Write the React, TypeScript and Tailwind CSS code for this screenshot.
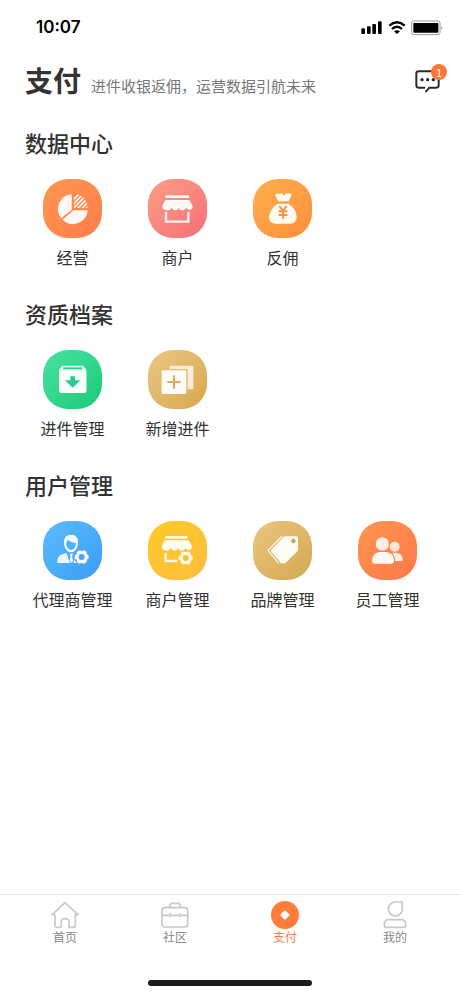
import type { ReactNode } from 'react';

const STORE_AWNING = 'M52 63H124L134 81Q134 92 125 92Q117 92 115 86Q111 94 103 94Q95 94 92 86Q90 94 82 94Q75 94 71 86Q67 94 60 94Q43 94 43 80Z';

function Glyph({ children }: { children: ReactNode }) {
  return (
    <svg viewBox="0 0 177 177" className="size-full" fill="#fff" fillOpacity="0.94" aria-hidden="true">
      {children}
    </svg>
  );
}

function Gear({ x, y, color }: { x: number; y: number; color: string }) {
  return (
    <g transform={`translate(${x} ${y})`} fillOpacity="1">
      <circle r="23" fill={color} />
      <circle r="18" fill="#fff8ea" />
      {[0, 60, 120].map((angle) => (
        <rect key={angle} x="-21" y="-7" width="42" height="14" rx="4" fill="#fff8ea" transform={`rotate(${angle})`} />
      ))}
      <circle r="9" fill={color} />
    </g>
  );
}

const pie = (
  <Glyph>
    <path d="M86 46A44 44 0 0 0 55 118L86 92Z" />
    <path d="M91 94H134A44 44 0 0 1 59 122Z" />
    <clipPath id="pie-slice">
      <path d="M92 44A44 44 0 0 1 134 87H92Z" />
    </clipPath>
    <g clipPath="url(#pie-slice)" stroke="#fff" strokeWidth="5" strokeOpacity="0.94">
      <path d="M88 65L118 35M88 78L128 38M88 91L138 41M98 94L144 48M111 94L144 61M124 94L146 72" />
    </g>
  </Glyph>
);

const store = (
  <Glyph>
    <rect x="52" y="49" width="72" height="8" rx="3" />
    <path d={STORE_AWNING} />
    <path d="M54 98V128H121V98" fill="none" stroke="#fff" strokeWidth="7" strokeOpacity="0.88" />
  </Glyph>
);

const moneyBag = (
  <Glyph>
    <path d="M68 46Q74 42 80 45L88 42L91 50L98 44Q107 41 115 46Q117 48 114 52L107 67H76L68 52Q65 48 68 46Z" />
    <path d="M73 74H107Q131 91 131 114Q131 134 109 134H69Q48 134 48 114Q50 91 73 74Z" />
    <path d="M79 81L90 95L101 81M90 95V119M77 97H103M77 108H103" fill="none" stroke="#fb9638" strokeWidth="6" />
  </Glyph>
);

const archive = (
  <Glyph>
    <path d="M57 47H121L130 59V121Q130 129 122 129H56Q48 129 48 121V59Z" fillOpacity="0.78" />
    <path d="M61 55H117" stroke="#22cf8c" strokeWidth="5" />
    <path d="M48 62H130V121Q130 129 122 129H56Q48 129 48 121Z" fillOpacity="0.85" />
    <path d="M82 79H96V91H112L89 113L66 91H82Z" fill="#29cb8d" fillOpacity="1" />
  </Glyph>
);

const addDocument = (
  <Glyph>
    <path d="M68 47H133Q136 47 136 50V115Q136 118 133 118H119V61Q119 57 115 57H65V50Q65 47 68 47Z" fillOpacity="0.75" />
    <rect x="41" y="61" width="74" height="71" rx="4" />
    <path d="M78 76V116M58 96H98" stroke="#dcae59" strokeWidth="6" />
  </Glyph>
);

const agent = (
  <Glyph>
    <path d="M84 41C71 41 63 49 63 62C63 80 71 94 84 94C97 94 105 80 105 62C105 49 97 41 84 41Z" />
    <path d="M69 68Q72 59 76 57Q86 67 99 66Q98 84 84 87Q72 85 69 68Z" fill="#51b0fa" fillOpacity="1" />
    <path d="M43 126Q41 107 54 101L70 95L80 122V126Z" fillOpacity="0.88" />
    <path d="M79 98H91L87 105L90 119L85 126L80 119L83 105Z" />
    <path d="M98 95L108 99V126H91Z" fillOpacity="0.88" />
    <Gear x={116} y={108} color="#48a7f8" />
  </Glyph>
);

const storeSettings = (
  <Glyph>
    <rect x="52" y="45" width="66" height="8" rx="2" />
    <path d={STORE_AWNING} transform="translate(-2 -5)" />
    <path d="M53 95V120H88" fill="none" stroke="#fff" strokeWidth="7" strokeOpacity="0.9" />
    <Gear x={113} y={111} color="#fdc22e" />
  </Glyph>
);

const tag = (
  <Glyph>
    <path d="M97 46H130Q135 46 135 51V85Q135 89 132 92L98 125Q95 128 91 127H84L54 91Q53 89 55 86L91 49Q94 46 97 46Z" />
    <path d="M87 46L45 88L77 127" fill="none" stroke="#fff" strokeWidth="4" strokeOpacity="0.85" />
    <circle cx="121" cy="60" r="7" fill="#cfa74c" fillOpacity="1" />
  </Glyph>
);

const staff = (
  <Glyph>
    <circle cx="110" cy="77" r="15" fillOpacity="0.8" />
    <path d="M103 95H114Q134 97 134 116Q134 120 130 120H108Z" fillOpacity="0.85" />
    <circle cx="73" cy="69" r="22" fill="#ff8650" fillOpacity="1" />
    <circle cx="73" cy="69" r="20" fillOpacity="0.85" />
    <path d="M65 90H87Q112 95 112 121Q112 131 104 131H60Z" fill="#ff8049" fillOpacity="1" />
    <path d="M63 93H87Q108 97 108 121Q108 128 101 128H49Q42 128 42 121Q43 97 63 93Z" />
  </Glyph>
);

type Entry = { label: string; tile: string; icon: ReactNode };

const sections: { title: string; entries: Entry[] }[] = [
  {
    title: '数据中心',
    entries: [
      { label: '经营', tile: 'from-[#ff984f] to-[#ff7b4b]', icon: pie },
      { label: '商户', tile: 'from-[#fd9d85] to-[#f56f78]', icon: store },
      { label: '反佣', tile: 'from-[#ffb04e] to-[#ff8d3b]', icon: moneyBag },
    ],
  },
  {
    title: '资质档案',
    entries: [
      { label: '进件管理', tile: 'from-[#48e2a1] to-[#12cb79]', icon: archive },
      { label: '新增进件', tile: 'from-[#eac783] to-[#d8a74b]', icon: addDocument },
    ],
  },
  {
    title: '用户管理',
    entries: [
      { label: '代理商管理', tile: 'from-[#5bbcfd] to-[#3b9cf6]', icon: agent },
      { label: '商户管理', tile: 'from-[#fdcb25] to-[#febc3c]', icon: storeSettings },
      { label: '品牌管理', tile: 'from-[#e9c680] to-[#d4a850]', icon: tag },
      { label: '员工管理', tile: 'from-[#ff9650] to-[#ff7748]', icon: staff },
    ],
  },
];

const tabs = [
  {
    label: '首页',
    active: false,
    icon: (
      <path d="M3 41L42 5L81 41H73V75Q73 79 69 79H54V61Q54 53 42 53Q31 53 31 61V79H17Q12 79 12 75V41Z" />
    ),
  },
  {
    label: '社区',
    active: false,
    icon: (
      <>
        <rect x="3" y="20" width="77" height="58" rx="8" />
        <path d="M27 20V12Q27 7 32 7H52Q57 7 57 12V20M3 43H23M30 43H52M59 43H80M27 37V49M56 37V49" />
      </>
    ),
  },
  {
    label: '支付',
    active: true,
    icon: (
      <>
        <circle cx="42" cy="42" r="42" fill="#ff7c3b" stroke="none" />
        <path d="M42 31L53 42L42 53L31 42Z" fill="#fff" stroke="#fff" strokeWidth="6" />
      </>
    ),
  },
  {
    label: '我的',
    active: false,
    icon: (
      <>
        <path d="M43 3H64V24A21 21 0 1 1 43 3Z" />
        <path d="M24 56H60Q74 56 74 70V74Q74 79 69 79H15Q10 79 10 74V70Q10 56 24 56Z" />
      </>
    ),
  },
];

function StatusBar() {
  return (
    <div className="flex h-14 items-center justify-between pl-9 pr-4 text-black">
      <time className="font-[Inter] text-[17px] font-semibold">10:07</time>
      <svg viewBox="0 0 249 48" className="h-4 w-[83px]" aria-hidden="true">
        <rect x="1" y="25" width="11" height="17" rx="3" />
        <rect x="18" y="19" width="11" height="23" rx="3" />
        <rect x="34" y="12" width="11" height="30" rx="3" />
        <rect x="51" y="4" width="11" height="38" rx="3" />
        <g fill="none" stroke="#000" strokeWidth="7">
          <path d="M85 17Q108 -3 131 17" />
          <path d="M93 27Q108 13 123 27" />
        </g>
        <path d="M99 34Q108 27 117 34L108 42Z" />
        <rect x="152" y="3" width="85" height="41" rx="6" fill="none" stroke="#999" strokeWidth="3" />
        <rect x="157" y="9" width="75" height="29" rx="2" />
        <path d="M241 18Q247 23 241 29Z" fill="#999" />
      </svg>
    </div>
  );
}

export default function App() {
  return (
    <div className="flex min-h-screen flex-col bg-white font-['Noto_Sans_CJK_SC',sans-serif] text-[#333]">
      <StatusBar />
      <header className="flex h-12 items-center justify-between pl-[25px] pr-[13px]">
        <div className="flex items-baseline gap-[10px]">
          <h1 className="text-[28px] font-bold leading-[48px]">支付</h1>
          <p className="text-[15px] text-[#777]">进件收银返佣，运营数据引航未来</p>
        </div>
        <button type="button" aria-label="消息" className="relative size-8">
          <svg viewBox="0 0 96 96" className="size-full" fill="none" stroke="#2b2b2b" strokeWidth="6" strokeLinecap="round" aria-hidden="true">
            <path d="M28 71H11Q4 71 4 64V29Q4 22 11 22H64Q71 22 71 29V64Q71 71 64 71H43L33 82" />
            <g fill="#2b2b2b" stroke="none">
              <circle cx="21" cy="47" r="5" />
              <circle cx="38" cy="47" r="5" />
              <circle cx="55" cy="47" r="5" />
            </g>
          </svg>
          <span className="absolute right-0 top-0 flex size-4 items-center justify-center rounded-full bg-[#ff7738] text-[11px] leading-4 text-white">
            1
          </span>
        </button>
      </header>
      <main className="flex flex-1 flex-col gap-[27px] pt-[21px]">
        {sections.map((section) => (
          <section key={section.title}>
            <h2 className="px-[25px] text-[22px] font-medium leading-[34px]">{section.title}</h2>
            <div className="mt-5 grid grid-cols-4 px-5">
              {section.entries.map((entry) => (
                <button key={entry.label} type="button" className="flex flex-col items-center gap-[7px]">
                  <span className={`size-[59px] rounded-[25px] bg-linear-to-br ${entry.tile}`}>{entry.icon}</span>
                  <span className="whitespace-nowrap text-base">{entry.label}</span>
                </button>
              ))}
            </div>
          </section>
        ))}
      </main>
      <footer className="border-t border-[#ebebeb]">
        <nav className="grid grid-cols-4 px-[10px] pt-[6px]">
          {tabs.map((tab) => (
            <button key={tab.label} type="button" className="flex flex-col items-center">
              <svg viewBox="0 0 84 84" className="size-7" fill="none" stroke="#c8c8c8" strokeWidth="5" strokeLinejoin="round" aria-hidden="true">
                {tab.icon}
              </svg>
              <span className={`text-xs ${tab.active ? 'text-[#ff7c3b]' : 'text-[#888]'}`}>{tab.label}</span>
            </button>
          ))}
        </nav>
        <div className="mx-auto mb-[10px] mt-[35px] h-[6px] w-[164px] rounded-full bg-[#1c1c1c]" />
      </footer>
    </div>
  );
}
